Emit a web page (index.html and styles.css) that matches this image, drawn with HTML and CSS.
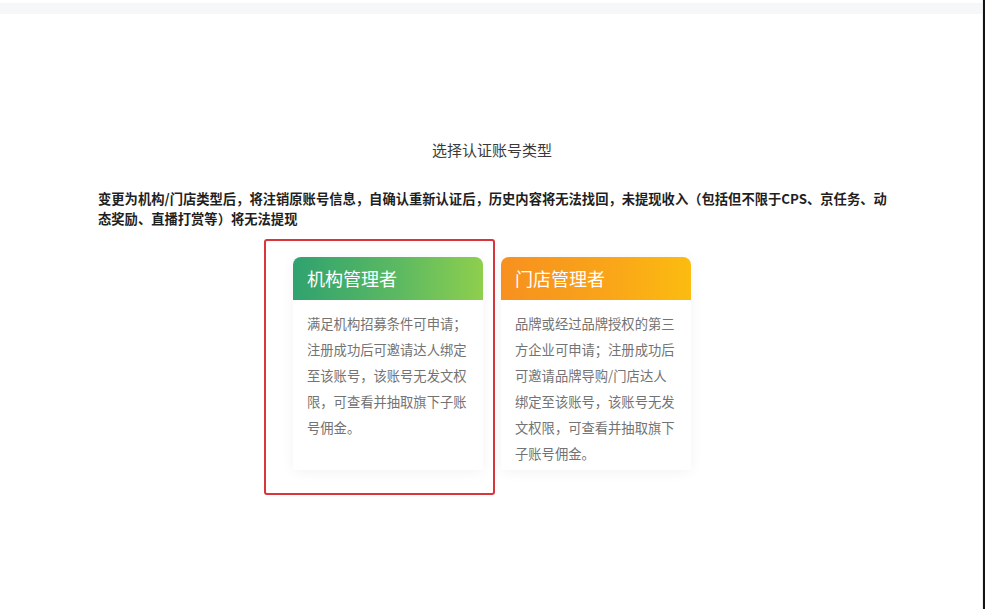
FILE: index.html
```html
<!DOCTYPE html>
<html lang="zh-CN">
<head>
<meta charset="utf-8">
<title>选择认证账号类型</title>
<link rel="stylesheet" href="styles.css">
</head>
<body>
<div class="frame">
  <main class="page">
    <div class="topband"></div>
    <h1 class="title">选择认证账号类型</h1>
    <p class="notice">变更为机构/门店类型后，将注销原账号信息，自确认重新认证后，历史内容将无法找回，未提现收入（包括但不限于CPS、京任务、动态奖励、直播打赏等）将无法提现</p>
    <div class="cards">
      <div class="card">
        <div class="card-head green">机构管理者</div>
        <div class="card-body">满足机构招募条件可申请；注册成功后可邀请达人绑定至该账号，该账号无发文权限，可查看并抽取旗下子账号佣金。</div>
        <div class="highlight"></div>
      </div>
      <div class="card">
        <div class="card-head orange">门店管理者</div>
        <div class="card-body">品牌或经过品牌授权的第三方企业可申请；注册成功后可邀请品牌导购/门店达人绑定至该账号，该账号无发文权限，可查看并抽取旗下子账号佣金。</div>
      </div>
    </div>
  </main>
  <div class="edge"></div>
</div>
</body>
</html>
```
FILE: styles.css
```css
html, body {
  margin: 0;
  padding: 0;
  background: #ffffff;
}
body {
  font-family: "Noto Sans CJK SC", "Noto Sans", sans-serif;
  color: #333;
}
.frame {
  display: flex;
  height: 609px;
  overflow: hidden;
}
.page {
  flex: 1;
  border-right: 1px solid #ececec;
  display: flex;
  flex-direction: column;
}
.topband {
  height: 11px;
  margin-top: 3px;
  background: #f6f7f9;
}
.edge {
  width: 2px;
  background: #141414;
}
.title {
  margin: 126px 0 0;
  font-size: 15px;
  line-height: 20px;
  font-weight: 400;
  color: #3a3a3a;
  text-align: center;
  padding-left: 2px;
}
.notice {
  margin: 29px 84px 0 98px;
  font-size: 13.3px;
  line-height: 20px;
  font-weight: 700;
  color: #1f1f1f;
}
.cards {
  margin-top: 28px;
  display: flex;
  justify-content: center;
  gap: 18px;
  padding-left: 2px;
}
.card {
  position: relative;
  width: 190px;
  height: 213px;
  background: #fff;
  border-radius: 8px 8px 2px 2px;
  box-shadow: 0 2px 14px rgba(0, 0, 0, 0.05);
  display: flex;
  flex-direction: column;
}
.card-head {
  height: 43px;
  border-radius: 8px 8px 0 0;
  color: #fff;
  font-size: 18px;
  line-height: 43px;
  padding-left: 14px;
}
.green {
  background: linear-gradient(90deg, #2fa26f 0%, #5cb962 55%, #8ecf4d 100%);
}
.orange {
  background: linear-gradient(90deg, #f7901f 0%, #f9a419 55%, #fcbc10 100%);
}
.card-body {
  padding: 11px 14px 4px;
  font-size: 13.3px;
  line-height: 26px;
  color: #737373;
}
.highlight {
  position: absolute;
  left: -29px;
  top: -18px;
  width: 227px;
  height: 252px;
  border: 2px solid #d8363b;
  border-radius: 3px;
  pointer-events: none;
}
```
